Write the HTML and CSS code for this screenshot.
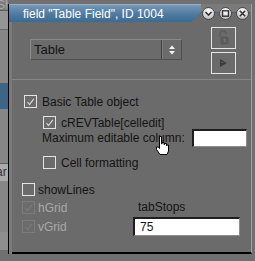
FILE: index.html
```html
<!DOCTYPE html>
<html lang="en">

<head>
    <meta charset="UTF-8">
    <title>field "Table Field", ID 1004</title>
    <link rel="stylesheet" href="styles.css">
</head>

<body>
    <div class="desk">
        <div class="behind">
            <div class="b-tab">Sh</div>
            <div class="b-light"></div>
            <div class="b-plain"></div>
            <div class="b-blue"></div>
            <div class="b-plain b-mid"></div>
            <div class="b-label">ar</div>
            <div class="b-plain b-low"></div>
            <div class="b-foot"></div>
        </div>

        <div class="win">
            <div class="titlebar">
                <div class="tab">field "Table Field", ID 1004</div>
                <div class="winbtns">
                    <span class="wbtn">
                        <svg width="13" height="13" viewBox="0 0 13 13"><polyline points="3.5,5 6.5,8 9.5,5" fill="none" stroke="#333" stroke-width="1.6"/></svg>
                    </span>
                    <span class="wbtn">
                        <svg width="13" height="13" viewBox="0 0 13 13"><rect x="3.5" y="3.8" width="6" height="5.4" fill="none" stroke="#333" stroke-width="1.4"/></svg>
                    </span>
                    <span class="wbtn">
                        <svg width="13" height="13" viewBox="0 0 13 13"><path d="M3.8 3.8 L9.2 9.2 M9.2 3.8 L3.8 9.2" stroke="#333" stroke-width="1.6"/></svg>
                    </span>
                </div>
            </div>

            <div class="body">
                <div class="top">
                    <div class="select">
                        <span class="sel-text">Table</span>
                        <span class="sel-arrows">
                            <svg width="20" height="19" viewBox="0 0 20 19"><polygon points="7,9 10,5.5 13,9" fill="#f4f4f4"/><polygon points="7,11 13,11 10,14.5" fill="#f4f4f4"/></svg>
                        </span>
                    </div>
                    <div class="tools">
                        <div class="tool">
                            <svg width="23" height="20" viewBox="0 0 23 20"><path d="M8 9 V6 a3 3 0 0 1 6 0" fill="none" stroke="#5c5c5c" stroke-width="1.5"/><rect x="9" y="9" width="7" height="7" rx="1" fill="#5e5e5e" stroke="#555" stroke-width="0.8"/><rect x="12" y="11" width="1.2" height="3" fill="#777"/></svg>
                        </div>
                        <div class="tool">
                            <svg width="23" height="20" viewBox="0 0 23 20"><polygon points="8,6 15,10 8,14" fill="#3c3c3c"/><polygon points="9,8 13,10 9,10" fill="#555"/></svg>
                        </div>
                    </div>
                </div>

                <div class="opts">
                    <div class="row r-basic">
                        <span class="cb on"><svg width="11" height="11" viewBox="0 0 11 11"><polyline points="2.5,6 4.5,8.5 8.8,2.8" fill="none" stroke="#d8d8d8" stroke-width="1.2"/></svg></span>
                        <span class="lbl">Basic Table object</span>
                    </div>
                    <div class="row r-sub">
                        <span class="cb on"><svg width="11" height="11" viewBox="0 0 11 11"><polyline points="2.5,6 4.5,8.5 8.8,2.8" fill="none" stroke="#d8d8d8" stroke-width="1.2"/></svg></span>
                        <span class="lbl">cREVTable[celledit]</span>
                    </div>
                    <div class="row r-max">
                        <span class="max-lbl">Maximum editable column:</span>
                        <span class="field max-field"></span>
                    </div>
                    <div class="row r-sub r-cell">
                        <span class="cb"></span>
                        <span class="lbl">Cell formatting</span>
                    </div>
                    <div class="row r-lines">
                        <span class="cb"></span>
                        <span class="lbl">showLines</span>
                    </div>
                    <div class="grid">
                        <div class="row r-grid">
                            <span class="cb off"><svg width="11" height="11" viewBox="0 0 11 11"><polyline points="2.5,6 4.5,8.5 8.8,2.8" fill="none" stroke="#7c7c7c" stroke-width="1.2"/></svg></span>
                            <span class="lbl dim">hGrid</span>
                        </div>
                        <div class="tabstops">tabStops</div>
                        <div class="row r-grid">
                            <span class="cb off"><svg width="11" height="11" viewBox="0 0 11 11"><polyline points="2.5,6 4.5,8.5 8.8,2.8" fill="none" stroke="#7c7c7c" stroke-width="1.2"/></svg></span>
                            <span class="lbl dim">vGrid</span>
                        </div>
                        <div class="field tab-field">75</div>
                    </div>
                </div>
            </div>
        </div>

        <svg class="hand" width="17" height="22" viewBox="0 0 17 22">
            <path d="M5.5 1.5 h2 v7.5 h0.5 v-1.5 h2 v2 h0.5 v-1 h2 v2 h0.5 v-0.5 h1.5 v6 l-1.5 3.5 h-7 l-3.5 -5 v-2.5 h2 l1 1.5 v-11.5 z" fill="#fff" stroke="#000" stroke-width="1"/>
        </svg>
    </div>
</body>

</html>
```

FILE: styles.css
```css
* {
    box-sizing: border-box;
}

body {
    margin: 0;
    font-family: "Liberation Sans", Arial, sans-serif;
    font-size: 12px;
    color: #141414;
}

.desk {
    position: relative;
    width: 255px;
    height: 261px;
    overflow: hidden;
    background: #707070;
}

/* app window lying behind, only its left edge shows */
.behind {
    width: 8px;
    height: 261px;
    display: flex;
    flex-direction: column;
    overflow: hidden;
}

.b-tab {
    height: 11px;
    line-height: 11px;
    background: #7b7b7b;
    border-bottom: 1px solid #5e5e5e;
    color: #a9a9a9;
    text-indent: -3px;
    white-space: nowrap;
}

.b-light {
    height: 19px;
    background: #959595;
    border-bottom: 1px solid #6a6a6a;
}

.b-plain {
    height: 53px;
    background: #868686;
}

.b-blue {
    height: 26px;
    background: #3d6588;
}

.b-mid {
    height: 55px;
    border-bottom: 1px solid #5f5f5f;
}

.b-label {
    height: 17px;
    line-height: 17px;
    background: #aaaaaa;
    color: #333;
    text-indent: -4px;
    white-space: nowrap;
}

.b-low {
    height: 51px;
}

.b-foot {
    height: 18px;
    background: #8e8e8e;
}

.win {
    position: absolute;
    left: 8px;
    top: 4px;
    width: 244px;
    height: 250px;
    background: #6b6b6b;
    border-left: 1px solid #000;
    border-right: 1px solid #a2a2a2;
    border-bottom: 2px solid #000;
}

.titlebar {
    display: flex;
    height: 18px;
}

.tab {
    width: 192px;
    height: 18px;
    padding-left: 14px;
    line-height: 18px;
    color: #fff;
    white-space: nowrap;
    background: linear-gradient(#7598b9, #4f7aa0 55%, #3f6a90);
    border-top: 1px solid #8fb0cc;
    clip-path: polygon(0 0, 100% 0, 100% 45%, calc(100% - 10px) 100%, 0 100%);
}

.winbtns {
    flex: 1;
    display: flex;
    gap: 4px;
    padding-top: 3px;
    padding-left: 1px;
    background: linear-gradient(#7a7a7a 8px, #3f6a90 8px, #3f6a90 9px, #6b6b6b 9px);
}

.wbtn {
    width: 13px;
    height: 13px;
    border-radius: 50%;
    border: 1px solid #4a4a4a;
    background: radial-gradient(circle at 50% 30%, #ffffff, #d6d6d6 55%, #9a9a9a);
    display: flex;
    align-items: center;
    justify-content: center;
}

.wbtn svg {
    flex: none;
}

.body {
    height: 232px;
    border-left: 3px solid #7b7b7b;
}

.top {
    display: flex;
    height: 58px;
    padding: 5px 0 0 18px;
    border-bottom: 1px solid #858585;
}

.select {
    display: flex;
    width: 152px;
    height: 21px;
    margin-top: 12px;
    border-top: 1px solid #8a8a8a;
    border-left: 1px solid #8a8a8a;
    border-right: 1px solid #4f4f4f;
    border-bottom: 1px solid #4f4f4f;
}

.sel-text {
    flex: 1;
    padding-left: 3px;
    line-height: 19px;
    font-size: 13px;
}

.sel-arrows {
    width: 20px;
    border-left: 1px solid #3e3e3e;
    box-shadow: inset 1px 0 #808080;
}

.tools {
    display: flex;
    flex-direction: column;
    gap: 3px;
    margin-left: 29px;
}

.tool {
    width: 25px;
    height: 22px;
    border: 1px solid #e6e6e6;
}

.opts {
    padding-top: 15px;
}

.row {
    display: flex;
    align-items: center;
    height: 13px;
}

.cb {
    flex: none;
    width: 13px;
    height: 13px;
    border: 1px solid #e4e4e4;
}

.cb svg {
    display: block;
}

.cb.off {
    border-color: #7c7c7c;
}

.lbl {
    margin-left: 5px;
    white-space: nowrap;
}

.dim {
    color: #a8a8a8;
    margin-left: 3px;
}

.r-basic {
    padding-left: 12px;
}

.r-sub {
    margin-top: 8px;
    padding-left: 31px;
}

.r-max {
    height: 18px;
    padding-left: 30px;
}

.max-lbl {
    width: 150px;
    white-space: nowrap;
}

.field {
    background: #fff;
    border-top: 2px solid #1e1e1e;
    border-left: 2px solid #1e1e1e;
    border-right: 1px solid #8d8d8d;
    border-bottom: 1px solid #8d8d8d;
}

.max-field {
    width: 55px;
    height: 18px;
}

.r-cell {
    margin-top: 9px;
}

.r-lines {
    margin-top: 14px;
    padding-left: 10px;
}

.r-lines .lbl {
    margin-left: 3px;
}

.grid {
    display: grid;
    grid-template-columns: 121px 107px;
    grid-template-rows: 13px 19px;
    row-gap: 3px;
    margin-top: 5px;
}

.r-grid {
    padding-left: 10px;
    align-self: center;
}

.tabstops {
    padding-left: 5px;
    line-height: 13px;
}

.tab-field {
    height: 19px;
    padding-left: 5px;
    line-height: 16px;
}

.hand {
    position: absolute;
    left: 154px;
    top: 135px;
}
```
